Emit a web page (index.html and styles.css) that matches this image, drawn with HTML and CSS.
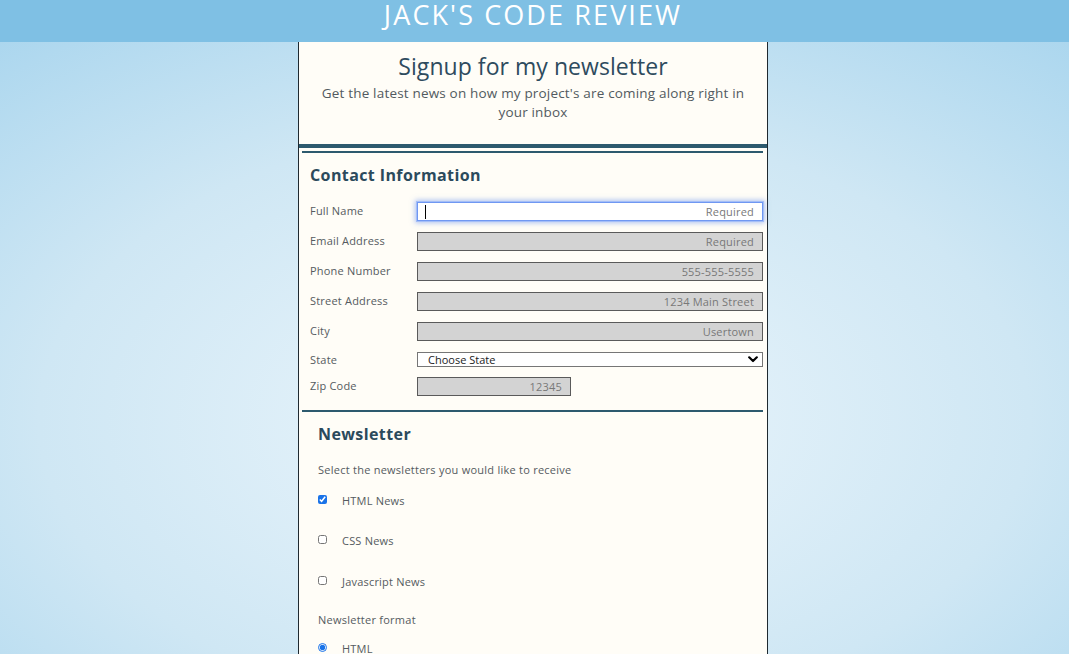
FILE: index.html
```html
<!DOCTYPE html>
<html lang="en">
<head>
<meta charset="utf-8">
<title>Jack's Code Review - Newsletter</title>
<link rel="stylesheet" href="styles.css">
</head>
<body>
<header class="site-header">
  <h1 class="site-title">JACK'S CODE REVIEW</h1>
</header>
<main class="card">
  <section class="intro">
    <h2 class="intro-title">Signup for my newsletter</h2>
    <p class="intro-text">Get the latest news on how my project's are coming along right in your inbox</p>
  </section>
  <section class="group contact">
    <h3 class="group-title">Contact Information</h3>
    <div class="form-grid">
      <label class="field-label" for="name">Full Name</label>
      <div class="field focused"><input class="text-input" id="name" type="text" placeholder="Required"></div>
      <label class="field-label" for="email">Email Address</label>
      <div class="field"><input class="text-input" id="email" type="email" placeholder="Required"></div>
      <label class="field-label" for="phone">Phone Number</label>
      <div class="field"><input class="text-input" id="phone" type="tel" placeholder="555-555-5555"></div>
      <label class="field-label" for="street">Street Address</label>
      <div class="field"><input class="text-input" id="street" type="text" placeholder="1234 Main Street"></div>
      <label class="field-label" for="city">City</label>
      <div class="field"><input class="text-input" id="city" type="text" placeholder="Usertown"></div>
      <label class="field-label state-label" for="state">State</label>
      <div class="field select-field">
        <select class="select-input" id="state">
          <option>Choose State</option>
        </select>
        <svg class="chevron" width="10" height="7" viewBox="0 0 10 7" aria-hidden="true"><path d="M1.2 1.3 L5 5 L8.8 1.3" fill="none" stroke="#000" stroke-width="2.2" stroke-linecap="round" stroke-linejoin="round"/></svg>
      </div>
      <label class="field-label" for="zip">Zip Code</label>
      <div class="field"><input class="text-input zip-input" id="zip" type="text" placeholder="12345"></div>
    </div>
  </section>
  <section class="group newsletter">
    <h3 class="group-title">Newsletter</h3>
    <p class="group-text">Select the newsletters you would like to receive</p>
    <div class="option first"><input class="check" type="checkbox" id="n-html" checked><label for="n-html">HTML News</label></div>
    <div class="option"><input class="check" type="checkbox" id="n-css"><label for="n-css">CSS News</label></div>
    <div class="option third"><input class="check" type="checkbox" id="n-js"><label for="n-js">Javascript News</label></div>
    <p class="group-text format">Newsletter format</p>
    <div class="option radio-row"><input class="radio" type="radio" name="fmt" id="f-html" checked><label for="f-html">HTML</label></div>
    <div class="option"><input class="radio" type="radio" name="fmt" id="f-text"><label for="f-text">Plain Text</label></div>
  </section>
</main>
</body>
</html>
```
FILE: styles.css
```css
* { box-sizing: border-box; }

html, body { margin: 0; padding: 0; }

body {
  font-family: "Open Sans", "Liberation Sans", sans-serif;
  min-height: 100vh;
  padding-right: 3px;
  background: radial-gradient(ellipse 900px 540px at 534px 420px, #ecf6fc 0%, #cfe7f4 55%, #a4d3ed 100%);
  background-color: #a4d3ed;
}

.site-header {
  height: 42px;
  margin-right: -3px;
  padding-right: 3px;
  background: #7fc0e4;
  text-align: center;
}

.site-title {
  margin: 0;
  font-size: 27px;
  line-height: 30px;
  font-weight: 400;
  color: #ffffff;
  letter-spacing: 2.1px;
}

.card {
  width: 470px;
  margin: 0 auto;
  background: #fffdf7;
  border: 1px solid #1f2930;
  border-top: 0;
}

.intro {
  text-align: center;
  padding: 9px 10px 0;
  height: 106px;
  border-bottom: 4px solid #2d5a6e;
}

.intro-title {
  margin: 0;
  font-size: 23px;
  line-height: 30px;
  font-weight: 400;
  color: #2e4b5e;
  letter-spacing: 0.05px;
}

.intro-text {
  margin: 3px 12px 0;
  font-size: 13.5px;
  line-height: 19px;
  color: #525a60;
  letter-spacing: 0.18px;
}

.group {
  margin: 3px 4px 0 3px;
  border-top: 2px solid #2d5a6e;
}

.contact {
  padding: 0 0 14px 8px;
}

.newsletter {
  margin-top: 0;
  padding: 0 0 20px 16px;
}

.group-title {
  margin: 12px 0 17px;
  font-size: 16px;
  line-height: 20px;
  font-weight: 700;
  color: #2b4a5c;
  letter-spacing: 0.4px;
}

.form-grid {
  display: grid;
  grid-template-columns: 107px 1fr;
  row-gap: 11px;
  align-items: start;
}

.field-label {
  font-size: 11px;
  line-height: 15px;
  padding-top: 1px;
  color: #555b60;
  letter-spacing: 0.2px;
}

.field-label.state-label {
  padding-top: 0;
  margin-bottom: -2px;
}

.field { position: relative; }

.text-input {
  display: block;
  width: 100%;
  height: 19px;
  margin: 0;
  padding: 0 8px;
  border: 1px solid #5a5a5a;
  background: #d3d3d3;
  font-family: "Open Sans", "Liberation Sans", sans-serif;
  font-size: 11px;
  text-align: right;
  color: #333;
}

.text-input::placeholder {
  color: #787878;
  letter-spacing: 0.2px;
}

.focused .text-input {
  background: #ffffff;
  border: 1px solid #6f97f2;
  outline: 1px solid #a4bef7;
  box-shadow: 0 0 5px 2px rgba(95, 140, 240, 0.5);
}

.focused::before {
  content: "";
  position: absolute;
  left: 8px;
  top: 3px;
  width: 1px;
  height: 14px;
  background: #000;
  z-index: 1;
}

.select-field {
  height: 15px;
  margin-bottom: -1px;
}

.select-input {
  display: block;
  width: 100%;
  height: 15px;
  margin: 0;
  padding: 0 20px 0 10px;
  border: 1px solid #767676;
  border-radius: 0;
  background: #ffffff;
  -webkit-appearance: none;
  appearance: none;
  font-family: "Open Sans", "Liberation Sans", sans-serif;
  font-size: 11px;
  line-height: 13px;
  color: #222;
}

.chevron {
  position: absolute;
  right: 5px;
  top: 4px;
  pointer-events: none;
}

.zip-input { width: 154px; }

.group-text {
  margin: 0;
  font-size: 11px;
  line-height: 15px;
  color: #555b60;
  letter-spacing: 0.25px;
}

.newsletter .group-title { margin-bottom: 18px; }

.option {
  display: flex;
  align-items: center;
  height: 15px;
  margin-top: 25px;
  font-size: 11px;
  color: #555b60;
  letter-spacing: 0.2px;
}

.option.first { margin-top: 16px; }

.option.third { margin-top: 26px; }

.option label { margin-left: 15px; }

.check, .radio {
  width: 9px;
  height: 9px;
  margin: -2px 0 0 0;
  accent-color: #1a73e8;
}

.group-text.format { margin-top: 23px; }

.option.radio-row { margin-top: 14px; }
```
